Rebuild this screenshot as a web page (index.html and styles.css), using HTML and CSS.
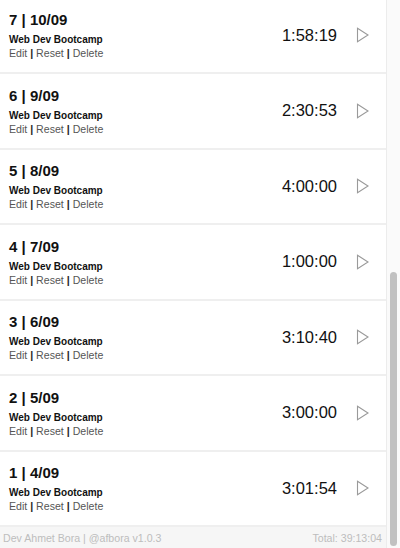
FILE: index.html
```html
<!DOCTYPE html>
<html lang="en">
<head>
<meta charset="utf-8">
<title>Timer</title>
<link rel="stylesheet" href="styles.css">
</head>
<body>
<div class="window">
  <div class="app">
    <div class="inner">
      <ul class="list">
        <li class="row">
          <div class="info">
            <div class="title">7 <b>|</b> 10/09</div>
            <div class="project">Web Dev Bootcamp</div>
            <div class="actions">Edit <b>|</b> Reset <b>|</b> Delete</div>
          </div>
          <div class="time">1:58:19</div>
          <svg class="play" viewBox="0 0 13 16" width="13" height="16"><path d="M1.5 1.2 L12 8 L1.5 14.8 Z"/></svg>
        </li>
        <li class="row">
          <div class="info">
            <div class="title">6 <b>|</b> 9/09</div>
            <div class="project">Web Dev Bootcamp</div>
            <div class="actions">Edit <b>|</b> Reset <b>|</b> Delete</div>
          </div>
          <div class="time">2:30:53</div>
          <svg class="play" viewBox="0 0 13 16" width="13" height="16"><path d="M1.5 1.2 L12 8 L1.5 14.8 Z"/></svg>
        </li>
        <li class="row">
          <div class="info">
            <div class="title">5 <b>|</b> 8/09</div>
            <div class="project">Web Dev Bootcamp</div>
            <div class="actions">Edit <b>|</b> Reset <b>|</b> Delete</div>
          </div>
          <div class="time">4:00:00</div>
          <svg class="play" viewBox="0 0 13 16" width="13" height="16"><path d="M1.5 1.2 L12 8 L1.5 14.8 Z"/></svg>
        </li>
        <li class="row">
          <div class="info">
            <div class="title">4 <b>|</b> 7/09</div>
            <div class="project">Web Dev Bootcamp</div>
            <div class="actions">Edit <b>|</b> Reset <b>|</b> Delete</div>
          </div>
          <div class="time">1:00:00</div>
          <svg class="play" viewBox="0 0 13 16" width="13" height="16"><path d="M1.5 1.2 L12 8 L1.5 14.8 Z"/></svg>
        </li>
        <li class="row">
          <div class="info">
            <div class="title">3 <b>|</b> 6/09</div>
            <div class="project">Web Dev Bootcamp</div>
            <div class="actions">Edit <b>|</b> Reset <b>|</b> Delete</div>
          </div>
          <div class="time">3:10:40</div>
          <svg class="play" viewBox="0 0 13 16" width="13" height="16"><path d="M1.5 1.2 L12 8 L1.5 14.8 Z"/></svg>
        </li>
        <li class="row">
          <div class="info">
            <div class="title">2 <b>|</b> 5/09</div>
            <div class="project">Web Dev Bootcamp</div>
            <div class="actions">Edit <b>|</b> Reset <b>|</b> Delete</div>
          </div>
          <div class="time">3:00:00</div>
          <svg class="play" viewBox="0 0 13 16" width="13" height="16"><path d="M1.5 1.2 L12 8 L1.5 14.8 Z"/></svg>
        </li>
        <li class="row">
          <div class="info">
            <div class="title">1 <b>|</b> 4/09</div>
            <div class="project">Web Dev Bootcamp</div>
            <div class="actions">Edit <b>|</b> Reset <b>|</b> Delete</div>
          </div>
          <div class="time">3:01:54</div>
          <svg class="play" viewBox="0 0 13 16" width="13" height="16"><path d="M1.5 1.2 L12 8 L1.5 14.8 Z"/></svg>
        </li>
      </ul>
      <footer class="footer">
        <span>Dev Ahmet Bora | @afbora v1.0.3</span>
        <span>Total: 39:13:04</span>
      </footer>
    </div>
  </div>
  <div class="scrollbar"><div class="thumb"></div></div>
</div>
</body>
</html>
```
FILE: styles.css
```css
html, body {
  margin: 0;
  padding: 0;
  background: #fff;
}
body {
  font-family: "Liberation Sans", Arial, Helvetica, sans-serif;
  color: #111;
}
.window {
  display: flex;
  height: 548px;
}
.app {
  flex: 1;
  min-width: 0;
  height: 548px;
  overflow: hidden;
  display: flex;
  flex-direction: column-reverse;
  background: #efefef;
}
.scrollbar {
  width: 14px;
  border-left: 1px solid #ececec;
  background: #fafafa;
  display: flex;
  flex-direction: column;
  justify-content: flex-end;
  padding: 0 3px 2px 3px;
  box-sizing: border-box;
}
.thumb {
  height: 274px;
  background: #c1c1c1;
  border-radius: 4px;
}
.inner {
  flex-shrink: 0;
  display: flex;
  flex-direction: column;
}
.list {
  list-style: none;
  margin: 0;
  padding: 0;
  display: flex;
  flex-direction: column;
  gap: 2px;
}
.row {
  height: 73.5px;
  box-sizing: border-box;
  background: #fff;
  display: flex;
  align-items: center;
  padding: 0 17px 0 9px;
}
.info {
  flex: 1;
  display: flex;
  flex-direction: column;
  padding-top: 1px;
}
.title {
  font-size: 15px;
  line-height: 18px;
  font-weight: bold;
}
.project {
  font-size: 10px;
  line-height: 12px;
  font-weight: bold;
  margin-top: 5px;
}
.actions {
  font-size: 10.6px;
  line-height: 13px;
  color: #555;
  margin-top: 1px;
}
.actions b {
  color: #222;
}
.time {
  font-size: 16.5px;
  color: #111;
  margin-right: 19px;
}
.play {
  display: block;
  fill: none;
  stroke: #9a9a9a;
  stroke-width: 1.1;
}
.footer {
  margin-top: 2px;
  height: 21px;
  background: #f6f6f6;
  display: flex;
  align-items: center;
  justify-content: space-between;
  padding: 0 4px 0 3px;
  font-size: 10.6px;
  color: #bdbdbd;
}
```
